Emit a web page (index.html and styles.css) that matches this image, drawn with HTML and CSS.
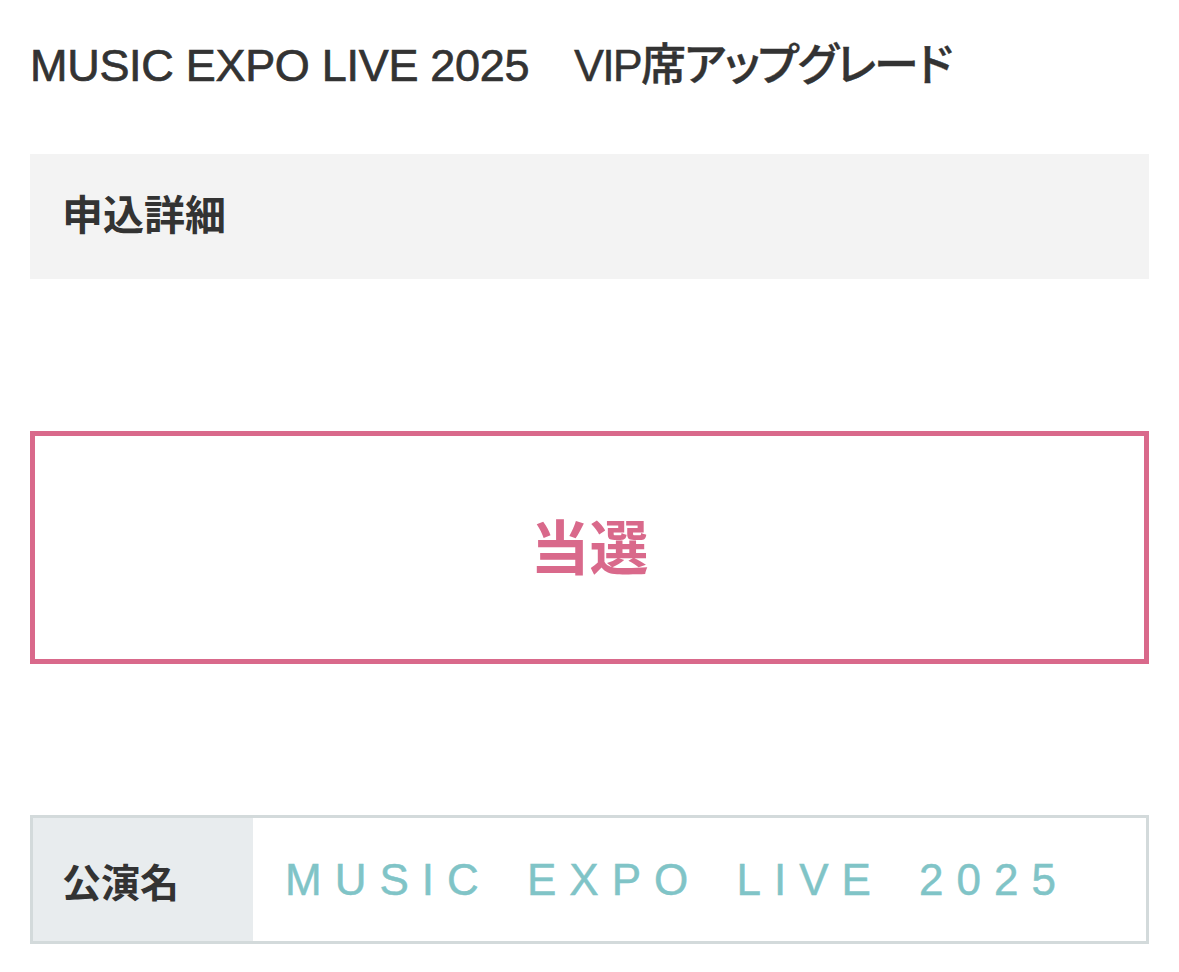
FILE: index.html
```html
<!DOCTYPE html>
<html lang="ja">
<head>
<meta charset="utf-8">
<title>MUSIC EXPO LIVE 2025 VIP席アップグレード</title>
<link rel="stylesheet" href="styles.css">
</head>
<body>
<main class="page">
  <h1 class="page-title">MUSIC EXPO LIVE 2025　<span class="title-sub">VIP席アップグレード</span></h1>
  <section class="section-head">
    <h2 class="section-title">申込詳細</h2>
  </section>
  <div class="result-box">
    <p class="result-text">当選</p>
  </div>
  <table class="detail-table">
    <tr>
      <th class="detail-label">公演名</th>
      <td class="detail-value">MUSIC EXPO LIVE 2025</td>
    </tr>
  </table>
</main>
</body>
</html>
```

FILE: styles.css
```css
html, body {
  margin: 0;
  padding: 0;
  background: #ffffff;
}

body {
  font-family: "Liberation Sans", "Noto Sans CJK JP", sans-serif;
  color: #333333;
}

.page {
  padding: 33px 30px 0 30px;
  display: flex;
  flex-direction: column;
}

.page-title {
  margin: 0;
  font-size: 45px;
  line-height: 66px;
  font-weight: 500;
  font-feature-settings: "palt";
  letter-spacing: -0.3px;
  -webkit-text-stroke: 0.7px #333333;
  white-space: nowrap;
}

.title-sub {
  letter-spacing: -1.8px;
  -webkit-text-stroke: 0.4px #333333;
}

.section-head {
  margin-top: 55px;
  height: 125px;
  background: #f3f3f3;
  display: flex;
  align-items: center;
  padding: 0 32px;
}

.section-title {
  margin: 0;
  font-size: 41px;
  line-height: 1;
  font-weight: 700;
}

.result-box {
  margin-top: 152px;
  height: 233px;
  box-sizing: border-box;
  border: 5px solid #d9698b;
  display: flex;
  align-items: center;
  justify-content: center;
}

.result-text {
  margin: 0 0 6px 0;
  font-size: 59px;
  line-height: 1;
  font-weight: 700;
  color: #d9698b;
  font-family: "Noto Sans CJK JP", sans-serif;
}

.detail-table {
  margin-top: 151px;
  border-collapse: separate;
  border-spacing: 0;
  width: 100%;
  border: 3px solid #d3dadb;
}

.detail-label {
  width: 220px;
  box-sizing: border-box;
  height: 123px;
  background: #e8ecee;
  text-align: left;
  padding: 0 0 0 29px;
  font-size: 39px;
  font-weight: 700;
  color: #333333;
  font-family: "Noto Sans CJK JP", sans-serif;
}

.detail-value {
  padding: 0 0 0 32px;
  font-size: 44px;
  font-weight: 400;
  color: #80c4c7;
  letter-spacing: 13px;
  word-spacing: 10px;
  -webkit-text-stroke: 0.5px #80c4c7;
  white-space: nowrap;
}
```
